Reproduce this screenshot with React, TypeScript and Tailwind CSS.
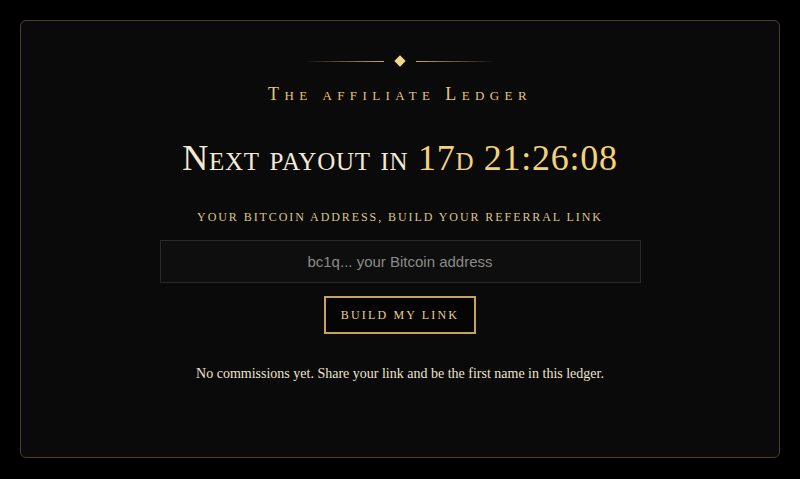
import React, { useState } from "react";

const serif = "font-['Liberation_Serif','DejaVu_Serif',serif]";

export default function App() {
  const [address, setAddress] = useState("");

  return (
    <div className="min-h-screen w-full bg-black p-5">
      <div className="flex h-[438px] w-full flex-col items-center rounded-md border border-[#4a4128] bg-[#0a0a0a] pt-9">
        {/* ornament */}
        <div className="flex items-center gap-3">
          <div className="h-px w-[80px] bg-gradient-to-r from-transparent to-[#c9a85a]" />
          <div className="h-[8px] w-[8px] rotate-45 bg-[#f3d98c]" />
          <div className="h-px w-[80px] bg-gradient-to-l from-transparent to-[#c9a85a]" />
        </div>

        <h2 className={`mt-[20px] text-[18px] leading-none tracking-[0.3em] text-[#e2c67a] [font-variant:small-caps] ${serif}`}>
          The affiliate Ledger
        </h2>

        <h1 className={`mt-[37px] text-[36px] leading-none tracking-[0.02em] text-[#f3ead6] [font-variant:small-caps] ${serif}`}>
          Next payout in <span className="text-[#f3d27a]">17d 21:26:08</span>
        </h1>

        <p className={`mt-[35px] text-[12px] uppercase leading-none tracking-[0.16em] text-[#dcc68c] ${serif}`}>
          Your bitcoin address, build your referral link
        </p>

        <input
          value={address}
          onChange={(e) => setAddress(e.target.value)}
          placeholder="bc1q... your Bitcoin address"
          className="mt-[17px] h-[43px] w-[481px] border border-[#2a2a2a] bg-[#0e0e0e] text-center font-['Liberation_Sans',Arial,sans-serif] text-[15px] text-[#ddd] outline-none placeholder:text-[#8a8a8a]"
        />

        <button
          className={`mt-[13px] h-[38px] w-[152px] border-2 border-[#c5a453] bg-[#050505] text-[12px] uppercase tracking-[0.18em] text-[#ead08a] ${serif}`}
        >
          Build my link
        </button>

        <p className={`mt-[29px] text-[14px] text-[#ece3cf] ${serif}`}>
          No commissions yet. Share your link and be the first name in this ledger.
        </p>
      </div>
    </div>
  );
}
